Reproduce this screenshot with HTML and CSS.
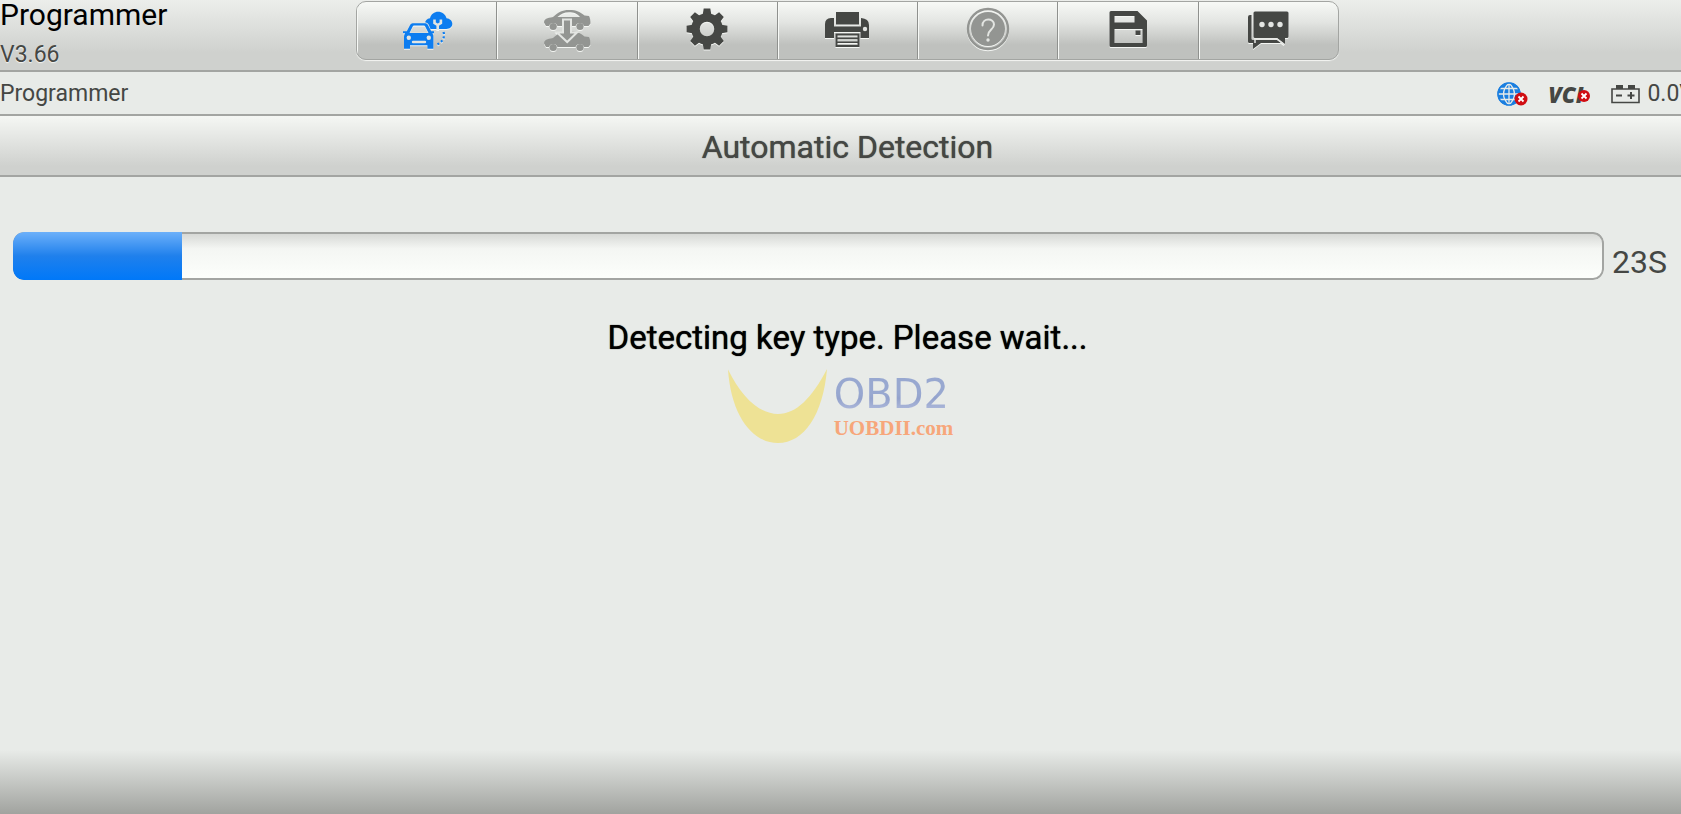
FILE: index.html
```html
<!DOCTYPE html>
<html lang="en">
<head>
    <meta charset="UTF-8">
    <meta name="viewport" content="width=device-width, initial-scale=1.0">
    <title>Programmer</title>
    <link rel="stylesheet" href="styles.css">
</head>
<body>
    <div class="screen">
        <!-- App header with toolbar -->
        <header class="header">
            <div class="app-info">
                <h1 class="app-name">Programmer</h1>
                <span class="version">V3.66</span>
            </div>
            <nav class="toolbar">
                <button class="tool-button active" aria-label="Vehicle service">
                    <svg class="tool-icon" viewBox="0 0 60 56">
                        <path fill="currentColor" d="M33 26c-3-1-5-3-5-5.500c0-3 2-5 5-5.300c1-4 4.500-6.400 8-6.400c4 0 7.500 2.500 8.500 6.400c3.300.4 5.800 2.600 5.800 5.600c0 3.200-2.600 5.200-6 5.200z"/>
                        <path class="cut" d="M37.500 16.500v3.500l3.200 2l3.200-2v-3.500M40.700 22v5" stroke-width="2.600"/>
                        <path class="cut" stroke-width="3" stroke-linejoin="round" d="M10 31l3.500-8.500q.8-1.700 2.500-1.700h12q1.700 0 2.500 1.700L34 31z"/>
                        <path fill="currentColor" fill-rule="evenodd" d="M6 28.200h3.800l3.400-6.400q.8-1.500 2.400-1.500h12.800q1.600 0 2.400 1.500l3.400 6.400H37v2h-1.600q1 1.500 1 3.500v12h-6v-3.500H13v3.500H7V33.700q0-2 1.200-3.500H6zM12.500 30h19l-3.300-6.600q-.4-.8-1.300-.8H17q-.9 0-1.300.8z"/>
                        <circle class="cut-fill" cx="11.800" cy="34.800" r="2.200"/>
                        <circle class="cut-fill" cx="31.800" cy="34.800" r="2.200"/>
                        <path class="cut" stroke-width="2.400" stroke-linecap="round" d="M16 39h12"/>
                        <path fill="none" stroke="currentColor" stroke-width="2.200" stroke-dasharray="2 2.400" d="M46.500 29q2.500 8-7 13"/>
                    </svg>
                </button>
                <button class="tool-button" aria-label="Change vehicle" disabled>
                    <svg class="tool-icon" viewBox="0 0 60 56">
                        <g fill="currentColor">
                            <path fill-rule="evenodd" d="M7 19.500c0-3.500 3-4.500 9-5.500c5-4.500 9-7 16-7c8 0 11 2 15.500 5.500l4.500.5c1 2 1.500 4 1.500 7.500l-2 2.500h-4.500a4.500 4.500 0 0 0-8.500 0h-18a4.500 4.500 0 0 0-8.500 0H9zM20.500 14H43c-3-3.500-6-4.700-11-4.700c-5 0-8 1.700-11.500 4.700z"/>
                            <circle cx="16.200" cy="23.500" r="3.600"/>
                            <circle cx="43" cy="23.500" r="3.600"/>
                        </g>
                        <!-- lower car has solid windows -->
                        <path fill="currentColor" d="M7 40.500c0-3.500 3-4.500 9-5.500c5-4.500 8-6 12-6.500h8c5 .5 8 2 11.500 5l4.500.5c1 2 1.500 4 1.500 7.500l-2 2.500h-4.500a4.500 4.500 0 0 0-8.500 0h-18a4.500 4.500 0 0 0-8.500 0H9z"/>
                        <circle fill="currentColor" cx="16.200" cy="44.500" r="3.600"/>
                        <circle fill="currentColor" cx="43" cy="44.500" r="3.600"/>
                        <path class="arrow" d="M26 16.500h8v13h6L30.200 39L20 29.500h6z"/>
                    </svg>
                </button>
                <button class="tool-button" aria-label="Settings">
                    <svg class="tool-icon" viewBox="0 0 60 56">
                        <g fill="currentColor" transform="translate(30 26)">
                            <g id="teeth">
                                <path id="tooth" d="M-4.500-13l1.200-7.400h6.600l1.200 7.400zM-4.500 13l1.200 7.400h6.600l1.200-7.400z"/>
                                <use href="#tooth" transform="rotate(90)"/>
                            </g>
                            <use href="#teeth" transform="rotate(45)"/>
                        </g>
                        <circle cx="30" cy="26" r="11.500" fill="none" stroke="currentColor" stroke-width="8.500"/>
                    </svg>
                </button>
                <button class="tool-button" aria-label="Print">
                    <svg class="tool-icon" viewBox="0 0 60 56">
                        <path fill="currentColor" d="M19 9h23v12.500H19zM8 35V21q0-5.500 6-6h3v8.500h27V15q8 .5 8 7v13h-8.500v-6H17v6z"/>
                        <path fill="currentColor" fill-rule="evenodd" d="M18.500 30.500h24V44h-24zM20.500 32.500v2h20v-2zM20.500 36.200v2.200h20v-2.200zM20.500 40v2h20v-2z"/>
                        <circle class="cut-fill" cx="48" cy="26" r="2.200"/>
                    </svg>
                </button>
                <button class="tool-button" aria-label="Help" disabled>
                    <svg class="tool-icon" viewBox="0 0 60 56">
                        <circle cx="30" cy="26" r="20" fill="none" stroke="currentColor" stroke-width="2.400"/>
                        <circle cx="30" cy="26" r="17" fill="currentColor"/>
                        <path class="cut" stroke-width="2" stroke-linecap="round" d="M24.500 22.500c0-8 11.500-7.500 11.500-1c0 5-6 5-6 11"/>
                        <circle class="cut-fill" cx="30" cy="37" r="1.700"/>
                    </svg>
                </button>
                <button class="tool-button" aria-label="Save">
                    <svg class="tool-icon" viewBox="0 0 60 56">
                        <path fill="currentColor" fill-rule="evenodd" d="M13 8h26.500l9.500 9.500V42.500q0 1.500-1.500 1.500H13q-1.500 0-1.500-1.500V9.500Q11.500 8 13 8zM16.500 13v6.500h20V13zM16.500 26v14h28V26z"/>
                        <path fill="currentColor" d="M37.500 27.500h5v4.500h-5z"/>
                    </svg>
                </button>
                <button class="tool-button" aria-label="Messages">
                    <svg class="tool-icon" viewBox="0 0 60 56">
                        <path fill="currentColor" d="M12 12h1.500v23.500q0 1.500 1.500 1.500h24l4 3H23l-8 6v-6h-3.500q-1.500 0-1.500-1.500V14q0-2 2-2z"/>
                        <path fill="currentColor" d="M17 8.500h32q1.500 0 1.500 1.500v23.500q0 1.500-1.500 1.500h-2v6l-8-6H17q-1.500 0-1.500-1.500V10q0-1.500 1.500-1.500z"/>
                        <path class="cut" stroke-width="1.500" d="M17 40v-4h22l7 5.500"/>
                        <g class="cut-fill">
                            <circle cx="24" cy="21.500" r="2.700"/>
                            <circle cx="33" cy="21.500" r="2.700"/>
                            <circle cx="42" cy="21.500" r="2.700"/>
                        </g>
                    </svg>
                </button>
            </nav>
        </header>

        <!-- Breadcrumb and connection status -->
        <div class="status-bar">
            <span>Programmer</span>
            <div class="status-list">
                <span class="status-item">
                    <svg class="globe" viewBox="0 0 24 24">
                        <circle cx="12" cy="12" r="11.500" fill="#1b7fe0"/>
                        <path fill="none" stroke="#e8ebe8" stroke-width="1.300" d="M1 12h22M3 6.500h18M3 17.500h18M12 1v22M12 1q-11 11 0 22M12 1q11 11 0 22"/>
                        <circle cx="12" cy="12" r="11" fill="none" stroke="#1b7fe0" stroke-width="1.500"/>
                    </svg>
                    <svg class="error-badge" viewBox="0 0 14 14">
                        <circle cx="7" cy="7" r="6.500" fill="#d00d12"/>
                        <path stroke="#fff" stroke-width="1.800" d="M4.500 4.500l5 5M9.500 4.500l-5 5"/>
                    </svg>
                </span>
                <span class="status-item vci">VCI
                    <svg class="error-badge" viewBox="0 0 14 14">
                        <circle cx="7" cy="7" r="6" fill="#d00d12"/>
                        <path stroke="#fff" stroke-width="1.800" d="M4.500 4.500l5 5M9.500 4.500l-5 5"/>
                    </svg>
                </span>
                <span class="status-item voltage">
                    <svg class="battery" viewBox="0 0 29 19">
                        <path fill="none" stroke="#454744" stroke-width="1.600" d="M1 4h27v13.500H1z"/>
                        <path fill="#454744" d="M5 0h7v4H5zM17 0h7v4h-7zM5 9.500h6v2H5zM16.500 9.500h7v2h-7zM19 7h2v7h-2z"/>
                    </svg>
                    0.0V
                </span>
            </div>
        </div>

        <h2 class="title-bar">Automatic Detection</h2>

        <!-- Detection progress -->
        <main class="content">
            <div class="progress-row">
                <progress class="progress" id="detection" value="106" max="1000" aria-label="Detection progress"></progress>
                <label class="seconds" for="detection">23S</label>
            </div>
            <p class="message">Detecting key type. Please wait...</p>
            <div class="brand">
                <svg class="brand-mark" viewBox="0 0 100 75">
                    <path fill="#eee295" d="M0 .5C14 29 32 45 50 45C68 45 84 29 99 0C95 46 76 74 50 74C24 74 3 46 0 .5z"/>
                </svg>
                <div class="brand-text">
                    <span class="brand-name">OBD2</span>
                    <span class="brand-site">UOBDII.com</span>
                </div>
            </div>
        </main>

        <footer class="footer"></footer>
    </div>
</body>
</html>
```

FILE: styles.css
```css
* {
    box-sizing: border-box;
}

body {
    margin: 0;
    overflow: hidden;
    font-family: Roboto, sans-serif;
    color: #454744;
    background-color: #e8ebe8;
}

/* The device screen runs slightly past the right edge */
.screen {
    display: flex;
    flex-direction: column;
    width: calc(100% + 14px);
    min-height: 100vh;
}

/* Header */
.header {
    display: grid;
    grid-template-columns: 21% 58% 21%;
    height: 72px;
    border-bottom: 2px solid #a3a5a2;
    background: linear-gradient(#eceeeb, #cfd1ce 75%);
}

.app-info {
    display: flex;
    flex-direction: column;
    justify-content: space-between;
}

.app-name {
    margin: 0;
    font-size: 30px;
    font-weight: 400;
    line-height: 30px;
    color: #000;
}

.version {
    font-size: 23px;
    line-height: 30px;
    text-shadow: 0 1px 1px #f4f6f3;
}

/* Toolbar */
.toolbar {
    display: flex;
    height: 59px;
    margin-top: 1px;
    border: 1px solid #a3a5a2;
    border-radius: 10px;
    overflow: hidden;
    background: linear-gradient(#f7f9f6, #e3e5e2 35%, #bfc1be 75%);
    box-shadow: 0 1px 1px #f4f6f3;
}

.tool-button {
    flex: 1;
    display: flex;
    align-items: center;
    justify-content: center;
    padding: 0;
    border: none;
    border-right: 1px solid #8f918e;
    background: none;
    box-shadow: inset 1px 0 0 #f7f9f6;
    color: #454744;
}

.tool-button:last-child {
    border-right: none;
}

.tool-button.active {
    color: #0d7df0;
}

.tool-button:disabled {
    color: #939592;
}

.tool-icon {
    width: 60px;
    height: 56px;
    filter: drop-shadow(0 1px 0 #f4f6f3);
}

.cut {
    stroke: #e3e5e2;
    fill: none;
}

.cut-fill {
    fill: #e3e5e2;
}

.arrow {
    fill: currentColor;
    stroke: #e3e5e2;
    stroke-width: 2px;
}

/* Status bar */
.status-bar {
    display: flex;
    align-items: center;
    justify-content: space-between;
    height: 44px;
    padding-top: 2px;
    padding-right: 1px;
    border-bottom: 2px solid #a3a5a2;
    font-size: 23px;
    line-height: 40px;
}

.status-list {
    display: flex;
    align-items: center;
    gap: 20px;
}

.status-item {
    position: relative;
    display: flex;
    align-items: center;
}

.globe {
    width: 24px;
    height: 24px;
    margin-right: 7px;
}

.error-badge {
    position: absolute;
    right: 0;
    bottom: 0;
    width: 14px;
    height: 14px;
}

.vci {
    padding-right: 8px;
    font-family: "Open Sans", sans-serif;
    font-size: 22px;
    font-weight: 800;
    font-style: italic;
    line-height: 24px;
}

.vci .error-badge {
    bottom: 3px;
}

.voltage {
    gap: 7px;
}

.battery {
    width: 29px;
    height: 19px;
}

/* Title bar */
.title-bar {
    height: 61px;
    margin: 0;
    border-bottom: 2px solid #a3a5a2;
    background: linear-gradient(#f5f7f4, #cfd1ce 85%);
    font-size: 32px;
    font-weight: 400;
    line-height: 62px;
    text-align: center;
    text-shadow: 0 0 1px #454744;
}

/* Progress */
.content {
    flex: 1;
    padding-top: 55px;
}

.progress-row {
    display: flex;
    align-items: flex-end;
    gap: 8px;
    padding: 0 28px 0 13px;
}

.progress {
    flex: 1;
    height: 48px;
    border: none;
    border-radius: 11px;
    overflow: hidden;
    appearance: none;
    background: none;
}

.progress::-webkit-progress-bar {
    border-radius: 11px;
    background: linear-gradient(#d3d5d2, #f4f6f3 35%, #fdfffc);
    box-shadow: inset 0 0 0 2px #a3a5a2;
}

.progress::-webkit-progress-value {
    border-radius: 11px 0 0 11px;
    background: linear-gradient(#6cb0fa, #1f80ec 50%, #0078f8);
}

.seconds {
    font-size: 32px;
    line-height: 36px;
}

.message {
    margin: 36px 0 0;
    font-size: 33px;
    line-height: 44px;
    text-align: center;
    color: #000;
    text-shadow: 0 0 1px #000;
}

/* Brand mark, centred on the window */
.brand {
    display: flex;
    justify-content: center;
    gap: 6px;
    width: 100vw;
    margin-top: 9px;
}

.brand-mark {
    width: 100px;
    height: 75px;
}

.brand-text {
    display: flex;
    flex-direction: column;
    padding-top: 4px;
}

.brand-name {
    font-family: "DejaVu Sans", sans-serif;
    font-size: 40px;
    line-height: 42px;
    color: transparent;
    background: linear-gradient(#98a8d0 50%, #93a2cc 60%, #b8c2e0);
    background-clip: text;
}

.brand-site {
    font-family: "Liberation Serif", serif;
    font-size: 21px;
    font-weight: 700;
    line-height: 26px;
    color: #f7a67a;
}

.footer {
    height: 64px;
    background: linear-gradient(#e8ebe8, #a1a39f);
}
```
